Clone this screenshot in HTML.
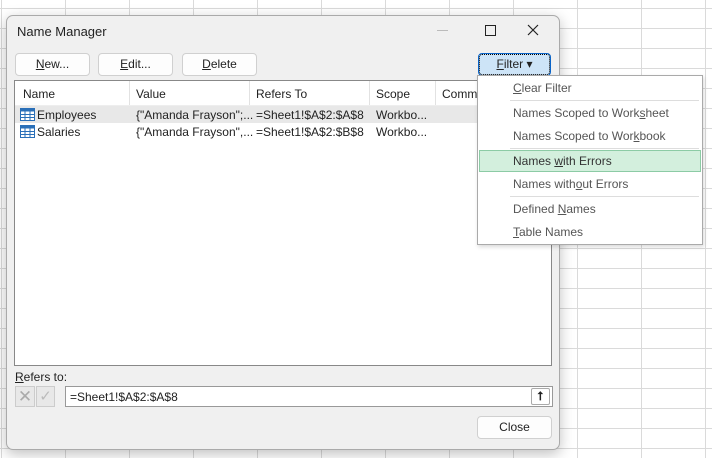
<!DOCTYPE html><html><head><style>
body{margin:0;width:712px;height:458px;overflow:hidden;font-family:"Liberation Sans",sans-serif;font-size:12px;color:#222;
background-color:#fff;background-image:linear-gradient(90deg,#dadada 1px,transparent 1px),linear-gradient(#dadada 1px,transparent 1px);background-size:64px 20px;background-position:1px 8px;position:relative}
.a{position:absolute}
.dlg{left:6px;top:15px;width:552px;height:433px;background:#f0f0f0;border:1px solid #aaa;border-radius:7px;box-shadow:0 4px 14px rgba(0,0,0,.25)}
.btn{position:absolute;height:21px;background:#fdfdfd;border:1px solid #d0d0d0;border-radius:4px;text-align:center;line-height:21px;font-size:12px}
u{text-decoration:underline}
.hd{position:absolute;top:6px;font-size:12px}
.mi{position:absolute;left:35px;font-size:12px;color:#555}
.sep{position:absolute;left:32px;right:3px;height:1px;background:#ddd}
</style></head><body>
<div class="a dlg">
 <div class="a" style="left:10px;top:8px;font-size:13px">Name Manager</div>
 <div class="a" style="left:430px;top:14px;width:11px;height:1px;background:#bbb"></div>
 <div class="a" style="left:478px;top:9px;width:9px;height:9px;border:1px solid #222"></div>
 <svg class="a" style="left:520px;top:8px" width="12" height="12"><path d="M1 1L11 11M11 1L1 11" stroke="#222" stroke-width="1.2"/></svg>
 <div class="btn" style="left:8px;top:37px;width:73px"><u>N</u>ew...</div>
 <div class="btn" style="left:91px;top:37px;width:73px"><u>E</u>dit...</div>
 <div class="btn" style="left:175px;top:37px;width:73px"><u>D</u>elete</div>
 <div class="btn" style="left:471px;top:37px;width:71px;background:#cde4f7;border:1px solid #0a64c8;outline:1px dotted #000;outline-offset:-2px"><u>F</u>ilter ▾</div>
 <div class="a" style="left:7px;top:64px;width:536px;height:284px;background:#fff;border:1px solid #888">
  <div class="a" style="left:0;top:0;width:536px;height:24px;border-bottom:1px solid #eee">
   <div class="hd" style="left:8px">Name</div><div class="a" style="left:114px;top:0;width:1px;height:24px;background:#e2e2e2"></div>
   <div class="hd" style="left:121px">Value</div><div class="a" style="left:234px;top:0;width:1px;height:24px;background:#e2e2e2"></div>
   <div class="hd" style="left:241px">Refers To</div><div class="a" style="left:354px;top:0;width:1px;height:24px;background:#e2e2e2"></div>
   <div class="hd" style="left:361px">Scope</div><div class="a" style="left:420px;top:0;width:1px;height:24px;background:#e2e2e2"></div>
   <div class="hd" style="left:427px">Comment</div>
  </div>
  <div class="a" style="left:0;top:25px;width:536px;height:17px;background:#e8e8e8"></div>
  <svg class="a" style="left:5px;top:27px" width="15" height="13"><rect x=".5" y=".5" width="14" height="12" fill="#fff" stroke="#2a6fb8"/><rect x=".5" y=".5" width="14" height="3" fill="#2a6fb8"/><path d="M5 0v13M10 0v13M0 6.5h15M0 9.5h15" stroke="#2a6fb8"/></svg>
  <svg class="a" style="left:5px;top:44px" width="15" height="13"><rect x=".5" y=".5" width="14" height="12" fill="#fff" stroke="#2a6fb8"/><rect x=".5" y=".5" width="14" height="3" fill="#2a6fb8"/><path d="M5 0v13M10 0v13M0 6.5h15M0 9.5h15" stroke="#2a6fb8"/></svg>
  <div class="a" style="left:22px;top:27px">Employees</div><div class="a" style="left:121px;top:27px">{"Amanda Frayson";...</div><div class="a" style="left:241px;top:27px">=Sheet1!$A$2:$A$8</div><div class="a" style="left:361px;top:27px">Workbo...</div>
  <div class="a" style="left:22px;top:44px">Salaries</div><div class="a" style="left:121px;top:44px">{"Amanda Frayson",...</div><div class="a" style="left:241px;top:44px">=Sheet1!$A$2:$B$8</div><div class="a" style="left:361px;top:44px">Workbo...</div>
 </div>
 <div class="a" style="left:8px;top:354px"><u>R</u>efers to:</div>
 <div class="a" style="left:8px;top:370px;width:18px;height:19px;border:1px solid #ccc;background:#e8e8e8;color:#aaa;font-size:17px;line-height:19px;text-align:center">✕</div>
 <div class="a" style="left:29px;top:370px;width:17px;height:19px;border:1px solid #ccc;background:#e8e8e8;color:#bbb;font-size:15px;line-height:19px;text-align:center">✓</div>
 <div class="a" style="left:58px;top:370px;width:486px;height:19px;background:#fff;border:1px solid #999"><div class="a" style="left:4px;top:3px">=Sheet1!$A$2:$A$8</div>
  <div class="a" style="right:2px;top:1px;width:17px;height:15px;border:1px solid #aaa;border-radius:2px;text-align:center;font-weight:bold;line-height:15px">⭡</div></div>
 <div class="btn" style="left:470px;top:400px;width:73px">Close</div>
</div>
<div class="a" style="left:477px;top:75px;width:224px;height:168px;background:#fff;border:1px solid #aaa;box-shadow:1px 2px 4px rgba(0,0,0,.15)">
 <div class="mi" style="top:5px"><u>C</u>lear Filter</div>
 <div class="sep" style="top:24px"></div>
 <div class="mi" style="top:30px">Names Scoped to Work<u>s</u>heet</div>
 <div class="mi" style="top:53px">Names Scoped to Wor<u>k</u>book</div>
 <div class="sep" style="top:72px"></div>
 <div class="a" style="left:1px;top:74px;width:220px;height:20px;background:#d3efdd;border:1px solid #8ccba5"></div>
 <div class="mi" style="top:78px;color:#333">Names <u>w</u>ith Errors</div>
 <div class="mi" style="top:101px">Names with<u>o</u>ut Errors</div>
 <div class="sep" style="top:120px"></div>
 <div class="mi" style="top:126px">Defined <u>N</u>ames</div>
 <div class="mi" style="top:149px"><u>T</u>able Names</div>
</div>
</body></html>
